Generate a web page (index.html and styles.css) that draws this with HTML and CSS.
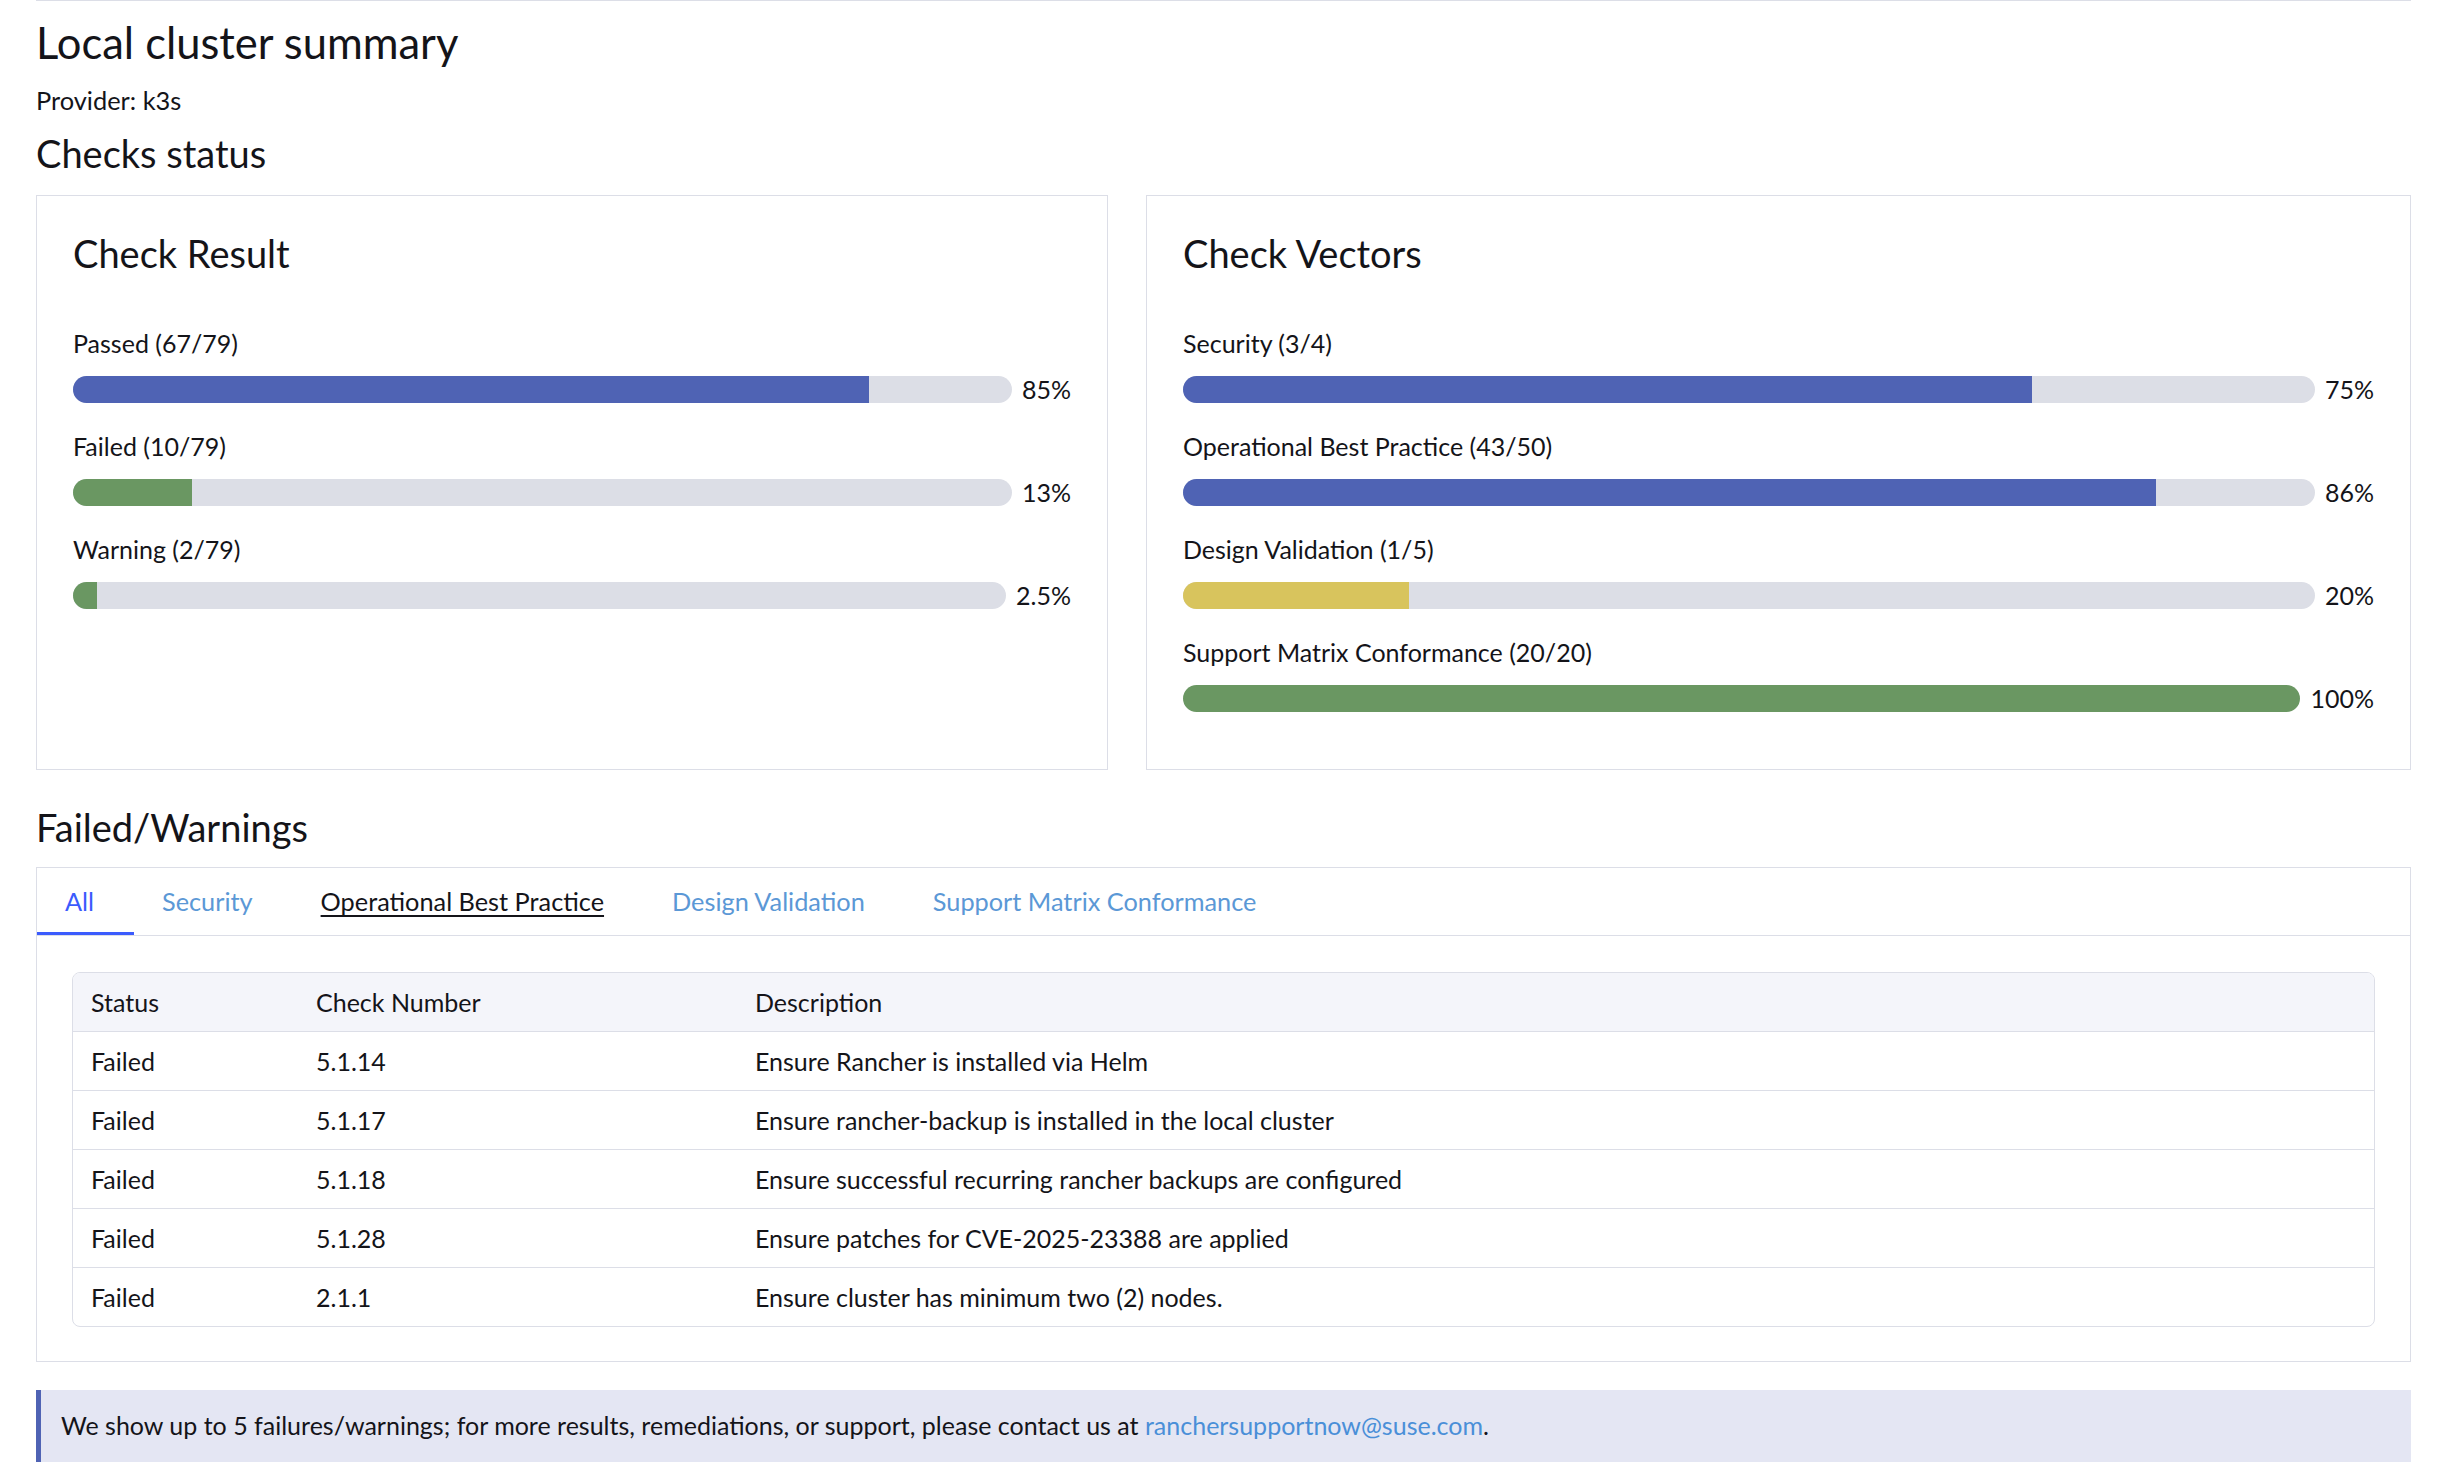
FILE: index.html
```html
<!DOCTYPE html>
<html lang="en">
<head>
<meta charset="utf-8">
<title>Local cluster summary</title>
<link rel="stylesheet" href="styles.css">
</head>
<body>
<main class="page">
  <h1 class="page-title">Local cluster summary</h1>
  <p class="provider">Provider: k3s</p>
  <h2 class="section-title">Checks status</h2>

  <div class="cards">
    <section class="card">
      <h3 class="card-title">Check Result</h3>
      <div class="meters">
        <div class="meter">
          <div class="meter-label">Passed (67/79)</div>
          <div class="meter-row">
            <div class="track"><div class="fill fill-blue" style="width:84.81%"></div></div>
            <span class="pct">85%</span>
          </div>
        </div>
        <div class="meter">
          <div class="meter-label">Failed (10/79)</div>
          <div class="meter-row">
            <div class="track"><div class="fill fill-green" style="width:12.66%"></div></div>
            <span class="pct">13%</span>
          </div>
        </div>
        <div class="meter">
          <div class="meter-label">Warning (2/79)</div>
          <div class="meter-row">
            <div class="track"><div class="fill fill-green" style="width:2.53%"></div></div>
            <span class="pct">2.5%</span>
          </div>
        </div>
      </div>
    </section>

    <section class="card">
      <h3 class="card-title">Check Vectors</h3>
      <div class="meters">
        <div class="meter">
          <div class="meter-label">Security (3/4)</div>
          <div class="meter-row">
            <div class="track"><div class="fill fill-blue" style="width:75%"></div></div>
            <span class="pct">75%</span>
          </div>
        </div>
        <div class="meter">
          <div class="meter-label">Operational Best Practice (43/50)</div>
          <div class="meter-row">
            <div class="track"><div class="fill fill-blue" style="width:86%"></div></div>
            <span class="pct">86%</span>
          </div>
        </div>
        <div class="meter">
          <div class="meter-label">Design Validation (1/5)</div>
          <div class="meter-row">
            <div class="track"><div class="fill fill-yellow" style="width:20%"></div></div>
            <span class="pct">20%</span>
          </div>
        </div>
        <div class="meter">
          <div class="meter-label">Support Matrix Conformance (20/20)</div>
          <div class="meter-row">
            <div class="track"><div class="fill fill-green" style="width:100%"></div></div>
            <span class="pct">100%</span>
          </div>
        </div>
      </div>
    </section>
  </div>

  <h2 class="section-title section-title--failed">Failed/Warnings</h2>

  <div class="tabbox">
    <nav class="tabs">
      <a class="tab tab--active">All</a>
      <a class="tab">Security</a>
      <a class="tab tab--hover">Operational Best Practice</a>
      <a class="tab">Design Validation</a>
      <a class="tab">Support Matrix Conformance</a>
    </nav>
    <div class="tab-panel">
      <table class="checks">
        <thead>
          <tr>
            <th class="col-status">Status</th>
            <th class="col-number">Check Number</th>
            <th class="col-desc">Description</th>
          </tr>
        </thead>
        <tbody>
          <tr><td>Failed</td><td>5.1.14</td><td>Ensure Rancher is installed via Helm</td></tr>
          <tr><td>Failed</td><td>5.1.17</td><td>Ensure rancher-backup is installed in the local cluster</td></tr>
          <tr><td>Failed</td><td>5.1.18</td><td>Ensure successful recurring rancher backups are configured</td></tr>
          <tr><td>Failed</td><td>5.1.28</td><td>Ensure patches for CVE-2025-23388 are applied</td></tr>
          <tr><td>Failed</td><td>2.1.1</td><td>Ensure cluster has minimum two (2) nodes.</td></tr>
        </tbody>
      </table>
    </div>
  </div>

  <div class="notice">We show up to 5 failures/warnings; for more results, remediations, or support, please contact us at <a class="notice-link">ranchersupportnow@suse.com</a>.</div>
</main>
</body>
</html>
```

FILE: styles.css
```css
* { box-sizing: border-box; }

html, body {
  margin: 0;
  padding: 0;
  background: #ffffff;
}

body {
  font-family: Lato, "Noto Sans", "Liberation Sans", sans-serif;
  color: #141419;
  font-size: 25px;
  line-height: 31px;
}

.page {
  margin: 0 33px 0 36px;
  border-top: 1px solid #dcdee7;
}

.page-title {
  margin: 15px 0 0;
  font-size: 43.5px;
  font-weight: 400;
  line-height: 52px;
}

.provider {
  margin: 17px 0 0;
  font-size: 25.4px;
  line-height: 30px;
}

.section-title {
  margin: 15px 0 0;
  font-size: 38px;
  font-weight: 400;
  line-height: 46px;
}

.section-title--failed {
  margin-top: 34px;
}

.cards {
  display: grid;
  grid-template-columns: 1072fr 1265fr;
  gap: 38px;
  margin-top: 19px;
}

.card {
  border: 1px solid #dcdee7;
  padding: 34px 36px 55px;
}

.card-title {
  margin: 0;
  font-size: 38px;
  font-weight: 400;
  line-height: 46px;
}

.meters {
  display: flex;
  flex-direction: column;
  gap: 26px;
  margin-top: 52px;
}

.meter-label {
  line-height: 31px;
}

.meter-row {
  display: flex;
  align-items: center;
  gap: 10px;
  margin-top: 15px;
  line-height: 31px;
}

.track {
  flex: 1;
  height: 27px;
  background: #dcdee6;
  border-radius: 14px;
  overflow: hidden;
}

.fill {
  height: 100%;
}

.fill-blue { background: #4f63b4; }
.fill-green { background: #6a9762; }
.fill-yellow { background: #d8c45d; }

.pct {
  white-space: nowrap;
}

.tabbox {
  margin-top: 17px;
  border: 1px solid #dcdee7;
}

.tabs {
  display: flex;
  border-bottom: 1px solid #dcdee7;
}

.tab {
  padding: 18px 40px 15px 28px;
  border-bottom: 3px solid transparent;
  font-size: 25.3px;
  line-height: 31px;
  color: #5b98d6;
  cursor: pointer;
}

.tab--active {
  color: #3b5bfd;
  border-bottom-color: #3b5bfd;
}

.tab--hover {
  color: #141419;
  text-decoration: underline;
  text-underline-offset: 4px;
}

.tab-panel {
  padding: 36px 35px 34px;
}

.checks {
  width: 100%;
  border: 1px solid #dcdee7;
  border-radius: 8px;
  border-collapse: separate;
  border-spacing: 0;
  overflow: hidden;
}

.checks th,
.checks td {
  height: 59px;
  padding: 0 18px;
  text-align: left;
  font-weight: 400;
  line-height: 31px;
  vertical-align: middle;
}

.checks th {
  background: #f4f5fa;
  height: 58px;
}

.checks td {
  border-top: 1px solid #dcdee7;
}

.col-status { width: 225px; }
.col-number { width: 439px; }

.notice {
  margin-top: 28px;
  border-left: 5px solid #4f63b4;
  background: #e4e6f3;
  padding: 20px 20px 21px;
  line-height: 31px;
}

.notice-link {
  color: #4a8fd8;
}
```
